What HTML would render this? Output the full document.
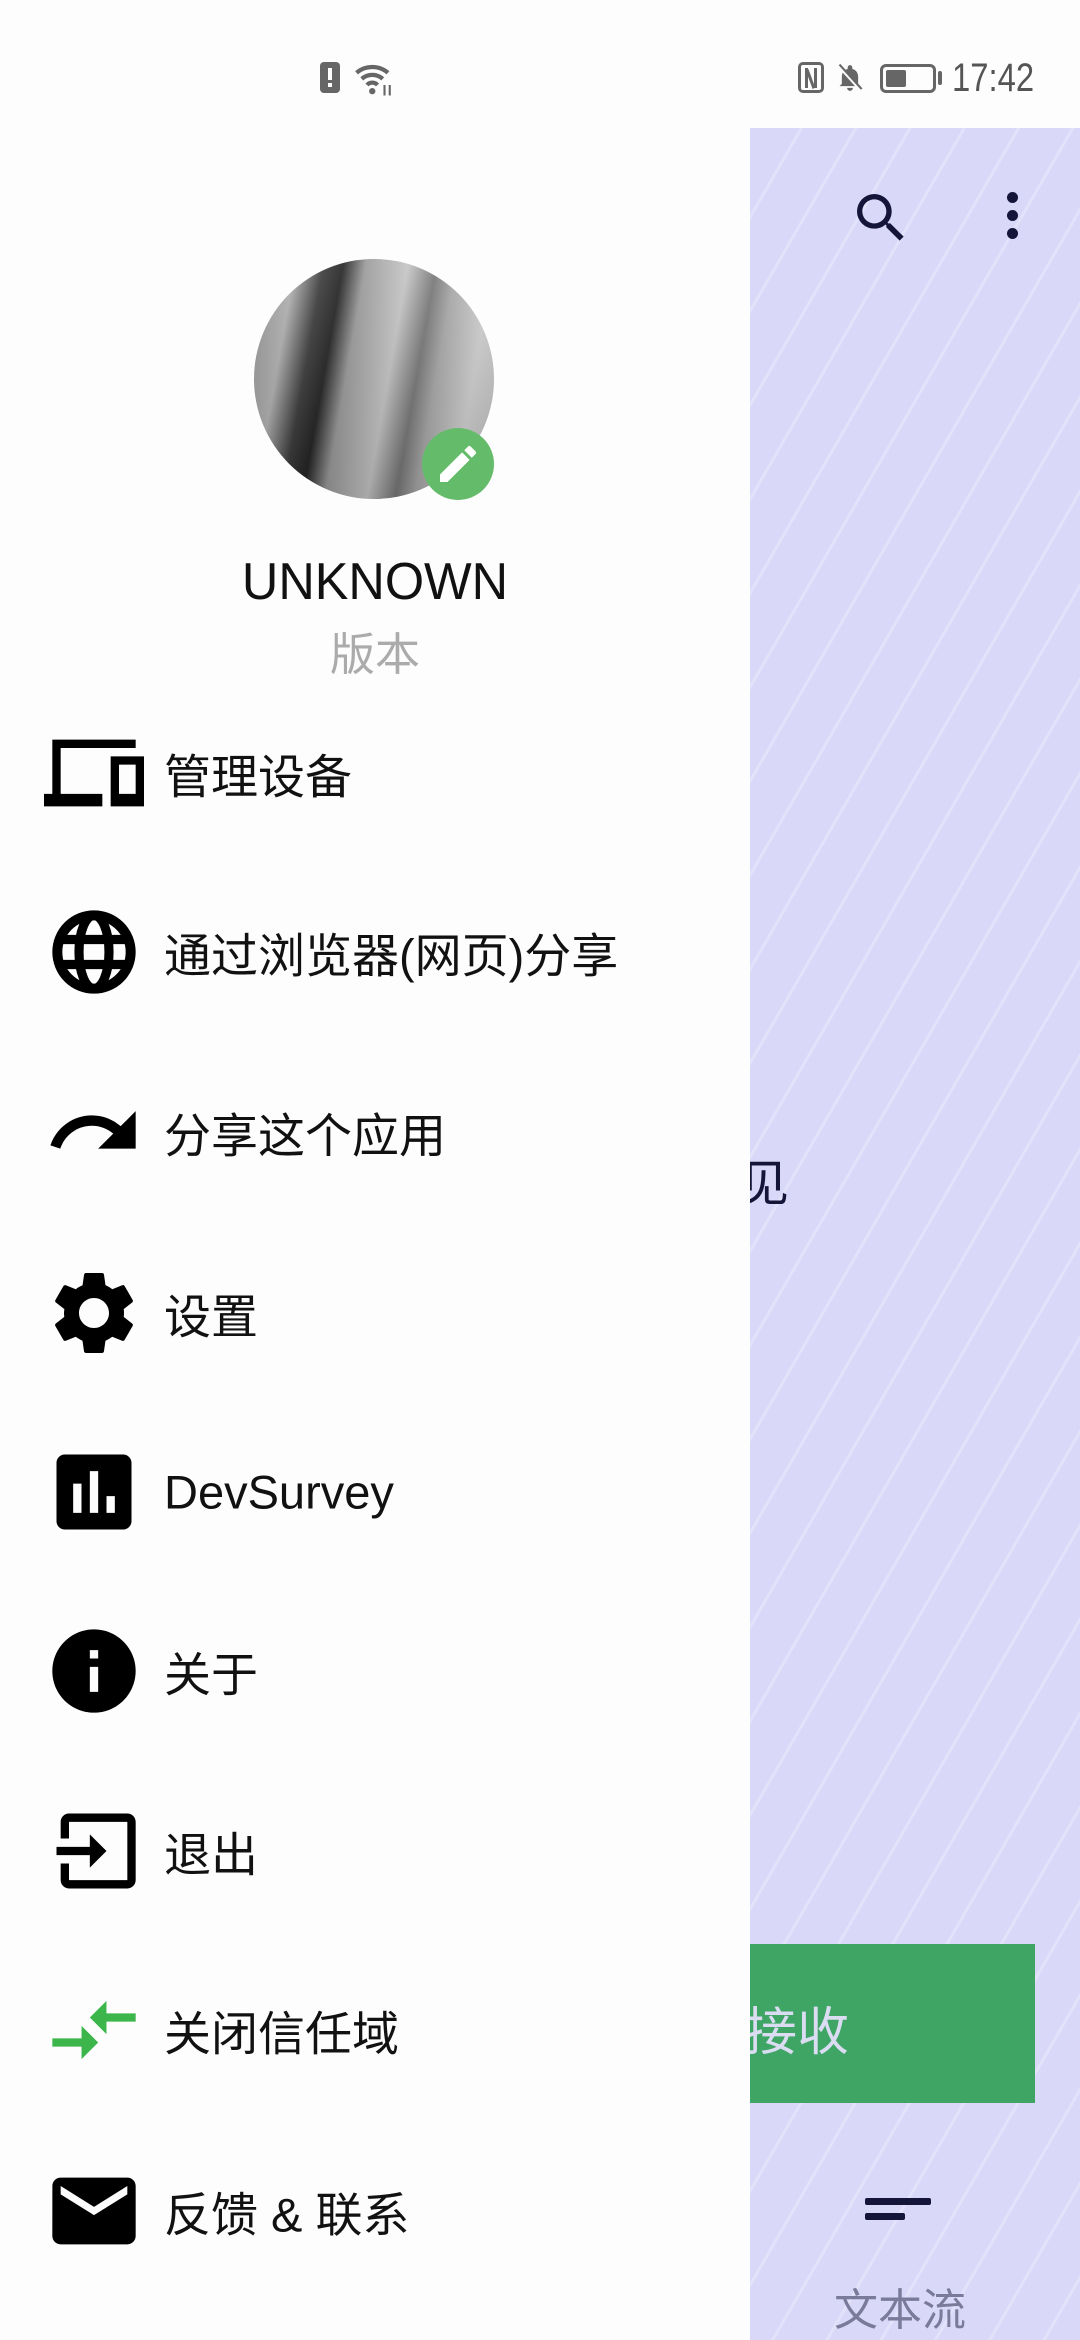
<!DOCTYPE html>
<html><head><meta charset="utf-8">
<style>
*{margin:0;padding:0;box-sizing:border-box}
html,body{width:1080px;height:2340px;overflow:hidden;background:#fdfdfd;font-family:"Liberation Sans","Noto Sans CJK SC",sans-serif}
.panel{position:absolute;left:749px;top:128px;width:331px;height:2212px;background:#d9d8f8;
background-image:repeating-linear-gradient(120deg,rgba(255,255,255,0) 0 44px,rgba(255,255,255,.25) 44px 47px)}
.drawer{position:absolute;left:0;top:0;width:750px;height:2340px;background:#fdfdfd;z-index:2}
.st{position:absolute;z-index:3}
.item{position:absolute;left:0;width:750px;height:100px}
.item svg{position:absolute;left:44px;top:0;width:100px;height:100px}
.item span{position:absolute;left:164px;top:50%;transform:translateY(-50%);font-size:47px;color:#111;white-space:nowrap}
</style></head><body>
<div class="panel">
  <svg style="position:absolute;left:100px;top:58px" width="64" height="64" viewBox="0 0 24 24"><path fill="#15153a" d="M15.5 14h-.79l-.28-.27A6.47 6.47 0 0 0 16 9.5 6.5 6.5 0 1 0 9.5 16c1.61 0 3.09-.59 4.23-1.57l.27.28v.79l5 4.99L20.49 19l-4.99-5zm-6 0C7.01 14 5 11.99 5 9.5S7.01 5 9.5 5 14 7.01 14 9.5 11.99 14 9.5 14z"/></svg>
  <div style="position:absolute;left:258px;top:64px;width:11px;height:11px;border-radius:50%;background:#15153a;box-shadow:0 18px 0 #15153a,0 36px 0 #15153a"></div>
  <div style="position:absolute;left:-10px;top:1016px;font-size:50px;color:#15153a">见</div>
  <div style="position:absolute;left:0;top:1816px;width:286px;height:159px;background:#3fa565"></div>
  <div style="position:absolute;left:-4px;top:1862px;font-size:52px;color:#dadcf2">接收</div>
  <div style="position:absolute;left:116px;top:2070px;width:66px;height:7px;background:#15153a;border-radius:2px"></div>
  <div style="position:absolute;left:116px;top:2085px;width:40px;height:7px;background:#15153a;border-radius:2px"></div>
  <div style="position:absolute;left:85px;top:2146px;font-size:44px;color:#7a7a9a">文本流</div>
</div>
<div class="drawer">
  <div class="st" style="left:320px;top:62px;width:20px;height:31px;background:#666;border-radius:4px"><div style="position:absolute;left:8px;top:6px;width:4px;height:12px;background:#fff"></div><div style="position:absolute;left:8px;top:21px;width:4px;height:4px;background:#fff"></div></div>
  <svg class="st" style="left:353px;top:60px" width="42" height="36" viewBox="0 0 24 20"><path fill="none" stroke="#666" stroke-width="2.4" d="M2 7a14 14 0 0 1 18 0M5 10.5a9 9 0 0 1 12 0M8 14a4 4 0 0 1 6 0"/><circle cx="11" cy="17.5" r="1.8" fill="#666"/><path stroke="#666" stroke-width="1.2" d="M18 14v6M21 14v6"/></svg>
  <div class="st" style="left:798px;top:62px;width:26px;height:31px;border:3px solid #666;border-radius:5px"><div style="position:absolute;left:4px;top:3px;width:3px;height:20px;background:#666"></div><div style="position:absolute;left:13px;top:3px;width:3px;height:20px;background:#666"></div><div style="position:absolute;left:8px;top:4px;width:3px;height:20px;background:#666;transform:rotate(-20deg)"></div></div>
  <svg class="st" style="left:836px;top:62px" width="28" height="32" viewBox="0 0 24 26"><path fill="#666" d="M12 24a2.5 2.5 0 0 0 2.5-2.5h-5A2.5 2.5 0 0 0 12 24zm7-6v-6c0-3.3-1.8-6-5-6.7V4a2 2 0 0 0-4 0v1.3C6.8 6 5 8.7 5 12v6l-2 2h18z"/><path stroke="#fdfdfd" stroke-width="3" d="M2 2l20 22"/><path stroke="#666" stroke-width="1.8" d="M3 1.5l19 21"/></svg>
  <div class="st" style="left:880px;top:64px;width:56px;height:29px;border:3px solid #666;border-radius:6px"><div style="position:absolute;left:3px;top:3px;width:20px;height:17px;background:#666;border-radius:2px"></div></div>
  <div class="st" style="left:938px;top:71px;width:4px;height:14px;background:#666;border-radius:2px"></div>
  <div class="st" style="left:952px;top:56px;font-size:40px;color:#555;transform:scaleX(.82);transform-origin:left">17:42</div>

  <div style="position:absolute;left:254px;top:259px;width:240px;height:240px;border-radius:50%;overflow:hidden;
  background:linear-gradient(100deg,#8a8a8a 0%,#b0b0b0 15%,#3a3a3a 25%,#222 32%,#9a9a9a 40%,#c5c5c5 55%,#777 65%,#a8a8a8 72%,#d0d0d0 85%,#bbb 100%)">
    <div style="position:absolute;inset:0;background:linear-gradient(180deg,rgba(255,255,255,.1),rgba(0,0,0,.15))"></div>
  </div>
  <div style="position:absolute;left:422px;top:428px;width:72px;height:72px;border-radius:50%;background:#64bb6a"></div>
  <svg style="position:absolute;left:434px;top:440px" width="48" height="48" viewBox="0 0 24 24"><path fill="#fff" d="M3 17.25V21h3.75L17.81 9.94l-3.75-3.75L3 17.25zM20.71 7.04a1 1 0 0 0 0-1.41l-2.34-2.34a1 1 0 0 0-1.41 0l-1.83 1.83 3.75 3.75 1.83-1.83z"/></svg>
  <div style="position:absolute;left:0;width:750px;top:552px;text-align:center;font-size:52px;color:#111;transform:scaleX(.97)">UNKNOWN</div>
  <div style="position:absolute;left:0;width:750px;top:618px;text-align:center;font-size:45px;color:#ababab">版本</div>

  <div class="item" style="top:723px"><svg viewBox="0 0 24 24"><path d="M4 6h18V4H2v13H0v3h14v-3H4V6zm20 2h-8v12h8V8zm-2 9h-4v-7h4v7z"/></svg><span>管理设备</span></div>
  <div class="item" style="top:902px"><svg viewBox="0 0 24 24"><circle cx="12" cy="12" r="8.8" fill="none" stroke="#000" stroke-width="2.4"/><ellipse cx="12" cy="12" rx="3.6" ry="8.8" fill="none" stroke="#000" stroke-width="2.2"/><path stroke="#000" stroke-width="2.2" d="M3.5 9h17M3.5 15h17"/></svg><span>通过浏览器(网页)分享</span></div>
  <div class="item" style="top:1082px"><svg viewBox="0 0 24 24"><path d="M18.4 10.6C16.55 8.99 14.15 8 11.5 8c-4.65 0-8.58 3.03-9.960 7.22L3.9 16c1.05-3.19 4.05-5.5 7.6-5.5 1.95 0 3.73.72 5.12 1.88L13 16h9V7l-3.6 3.6z"/></svg><span>分享这个应用</span></div>
  <div class="item" style="top:1263px"><svg viewBox="0 0 24 24"><path d="M19.14 12.94c.04-.3.06-.61.06-.94 0-.32-.02-.64-.07-.94l2.03-1.58a.49.49 0 0 0 .12-.61l-1.92-3.32a.488.488 0 0 0-.59-.22l-2.39.96c-.5-.38-1.03-.7-1.620-.94l-.36-2.54a.484.484 0 0 0-.48-.41h-3.84c-.24 0-.43.17-.47.41l-.36 2.54c-.59.24-1.13.57-1.62.94l-2.39-.96c-.22-.08-.47 0-.59.22L2.74 8.87c-.12.21-.08.47.12.61l2.03 1.58c-.05.3-.09.63-.09.94s.02.64.07.94l-2.03 1.58a.49.49 0 0 0-.12.61l1.92 3.32c.12.22.37.29.59.22l2.39-.96c.5.38 1.03.7 1.62.94l.36 2.54c.05.24.24.41.48.41h3.84c.24 0 .44-.17.47-.41l.36-2.54c.59-.24 1.13-.56 1.62-.94l2.39.96c.22.08.47 0 .59-.22l1.92-3.32c.12-.22.07-.47-.12-.61l-2.01-1.58zM12 15.6c-1.98 0-3.6-1.62-3.6-3.6s1.62-3.6 3.6-3.6 3.6 1.62 3.6 3.6-1.62 3.6-3.6 3.6z"/></svg><span>设置</span></div>
  <div class="item" style="top:1442px"><svg viewBox="0 0 24 24"><path d="M19 3H5c-1.1 0-2 .9-2 2v14c0 1.1.9 2 2 2h14c1.1 0 2-.9 2-2V5c0-1.1-.9-2-2-2zM9 17H7v-7h2v7zm4 0h-2V7h2v10zm4 0h-2v-4h2v4z"/></svg><span>DevSurvey</span></div>
  <div class="item" style="top:1621px"><svg viewBox="0 0 24 24"><path d="M12 2C6.48 2 2 6.48 2 12s4.48 10 10 10 10-4.48 10-10S17.52 2 12 2zm1 15h-2v-6h2v6zm0-8h-2V7h2v2z"/></svg><span>关于</span></div>
  <div class="item" style="top:1801px"><svg viewBox="0 0 24 24"><path d="M20 3H6c-1.1 0-2 .9-2 2v4h2V5h14v14H6v-4H4v4c0 1.1.9 2 2 2h14c1.1 0 2-.9 2-2V5c0-1.1-.9-2-2-2zM11 16l4-4-4-4v3H3v2h8v3z"/></svg><span>退出</span></div>
  <div class="item" style="top:1980px"><svg viewBox="0 0 24 24"><path fill="#3cb54a" d="M9.01 14H2v2h7.01v3L13 15l-3.99-4v3zm5.98-1v-3H22V8h-7.01V5L11 9l3.99 4z"/></svg><span>关闭信任域</span></div>
  <div class="item" style="top:2161px"><svg viewBox="0 0 24 24"><path d="M20 4H4c-1.1 0-1.99.9-1.99 2L2 18c0 1.1.9 2 2 2h16c1.1 0 2-.9 2-2V6c0-1.1-.9-2-2-2zm0 4l-8 5-8-5V6l8 5 8-5v2z"/></svg><span>反馈 &amp; 联系</span></div>
</div>
</body></html>
